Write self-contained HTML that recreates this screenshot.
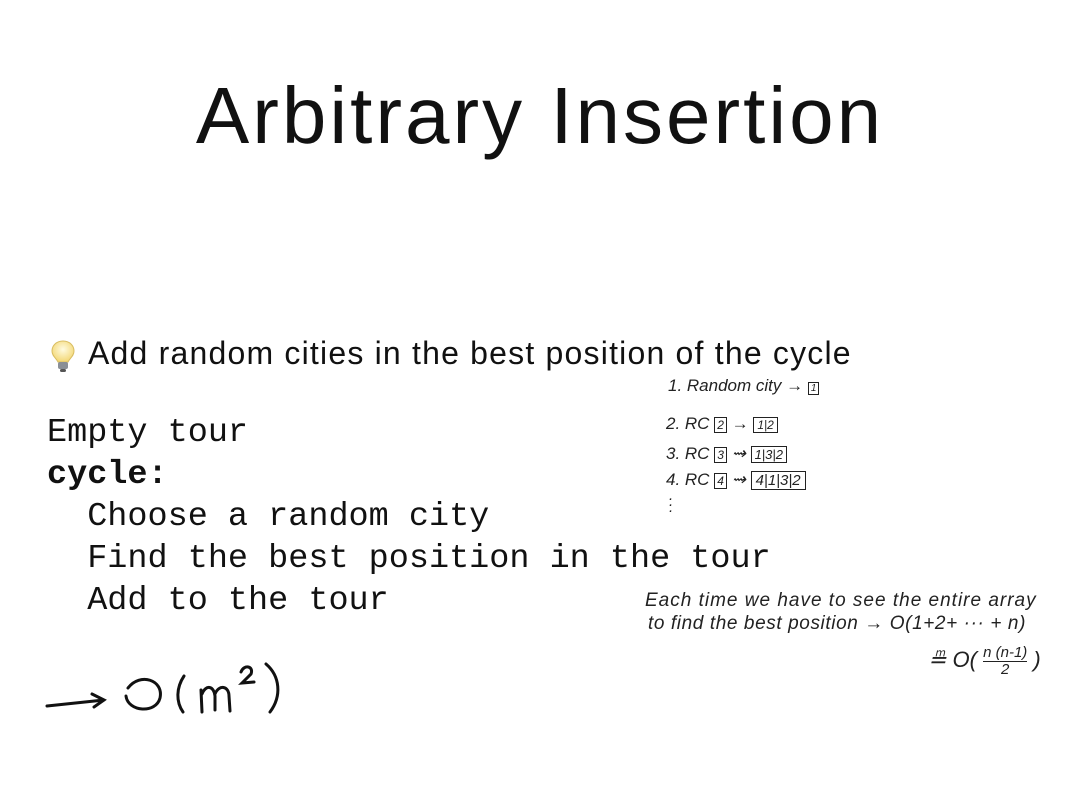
<!DOCTYPE html>
<html><head><meta charset="utf-8"><style>
body{margin:0;width:1080px;height:810px;background:#fff;position:relative;overflow:hidden;font-family:"Liberation Sans",sans-serif;color:#111}
.t{position:absolute;white-space:nowrap}
.code{font-family:"Liberation Mono",monospace;font-size:33.5px;left:47px}
.hw{font-family:"Liberation Sans",sans-serif;font-style:italic;color:#222;font-size:15px}
</style></head><body>
<div class="t" style="left:0;width:1080px;text-align:center;top:70px;font-size:80px;letter-spacing:3px;font-weight:300;color:#111">Arbitrary Insertion</div>
<svg style="position:absolute;left:48px;top:338px" width="30" height="36" viewBox="0 0 30 36">
<defs><radialGradient id="g" cx="50%" cy="40%" r="60%"><stop offset="0" stop-color="#fffbe0"/><stop offset="1" stop-color="#f3d774"/></radialGradient></defs>
<path d="M15 3C8 3 4 8 4 13c0 5 4 7 6 11h10c2-4 6-6 6-11 0-5-4-10-11-10z" fill="url(#g)" stroke="#d9bd60" stroke-width="1"/>
<rect x="10" y="24" width="10" height="7" rx="2" fill="#8a8f96"/><rect x="12" y="31" width="6" height="3" rx="1.5" fill="#555"/>
</svg>
<div class="t" style="left:88px;top:335px;font-size:32px;letter-spacing:1.2px;font-weight:300">Add random cities in the best position of the cycle</div>
<div class="t code" style="top:414px">Empty tour</div>
<div class="t code" style="top:456px;font-weight:bold">cycle:</div>
<div class="t code" style="top:498px">&nbsp;&nbsp;Choose a random city</div>
<div class="t code" style="top:540px">&nbsp;&nbsp;Find the best position in the tour</div>
<div class="t code" style="top:582px">&nbsp;&nbsp;Add to the tour</div>
<div class="t hw" style="left:668px;top:376px;font-size:17px">1. Random city → <span style="border:1.5px solid #222;font-size:10px;padding:0 2px">1</span></div>
<div class="t hw" style="left:666px;top:414px;font-size:17px">2. RC <span style="border:1.5px solid #222;font-size:12px;padding:0 2px">2</span> → <span style="border:1.5px solid #222;font-size:12px;padding:0 3px">1|2</span></div>
<div class="t hw" style="left:666px;top:444px;font-size:17px">3. RC <span style="border:1.5px solid #222;font-size:12px;padding:0 2px">3</span> ⇝ <span style="border:1.5px solid #222;font-size:13px;padding:0 3px">1|3|2</span></div>
<div class="t hw" style="left:666px;top:470px;font-size:17px">4. RC <span style="border:1.5px solid #222;font-size:12px;padding:0 2px">4</span> ⇝ <span style="border:1.5px solid #222;font-size:15px;padding:0 4px">4|1|3|2</span></div>
<div class="t hw" style="left:668px;top:496px;line-height:6px">·<br>·<br>·</div>
<div class="t hw" style="left:645px;top:590px;font-size:19px;letter-spacing:1px">Each time we have to see the entire array</div>
<div class="t hw" style="left:648px;top:613px;font-size:19px;letter-spacing:0.6px">to find the best position → O(1+2+ ··· + n)</div>
<div class="t hw" style="left:928px;top:644px;font-size:22px">≞ O( <span style="display:inline-block;vertical-align:middle;text-align:center;font-size:15px;line-height:17px"><span style="border-bottom:1.5px solid #222">n (n-1)</span><br>2</span> )</div>
<svg style="position:absolute;left:0;top:0" width="1080" height="810">
<g fill="none" stroke="#111" stroke-width="3" stroke-linecap="round">
<path d="M47 706 L104 700 M92 694 L104 700 L94 707"/>
<path d="M128 688 C140 672 164 680 160 698 C156 714 128 712 126 696"/>
<path d="M184 676 C176 688 176 702 183 712"/>
<path d="M201 690 L202 712 M202 694 C206 684 214 686 215 696 L215 710 M215 694 C219 684 229 686 229 696 L230 711"/>
<path d="M241 672 C244 664 254 666 251 674 L242 683 L254 682"/>
<path d="M266 664 C280 676 282 696 270 712"/>
</g></svg>
</body></html>
